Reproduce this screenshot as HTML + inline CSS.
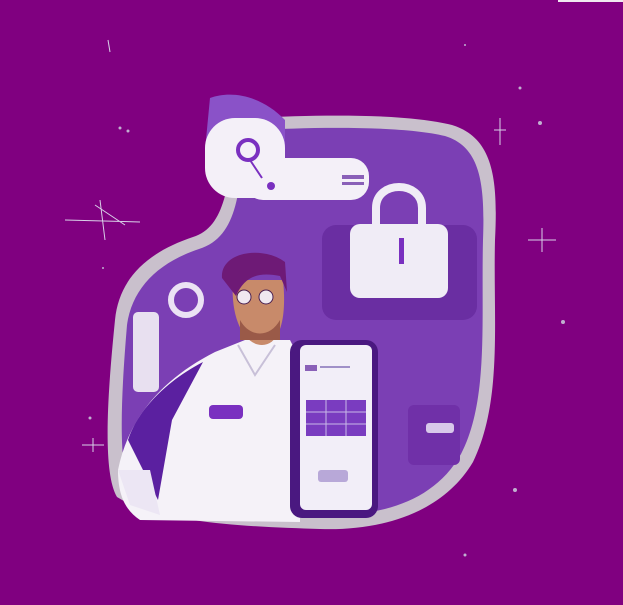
<!DOCTYPE html>
<html><head><meta charset="utf-8"><style>html,body{margin:0;padding:0;background:#800080;}svg{display:block}</style></head>
<body>
<svg width="623" height="605" viewBox="0 0 623 605" xmlns="http://www.w3.org/2000/svg">
<rect width="623" height="605" fill="#800080"/>
<rect x="558" y="0" width="65" height="2" fill="#f0e8f0"/>
<!-- blob border -->
<path d="M235 119 C300 115 400 112 452 125 C494 138 498 180 495 240 C493 320 503 400 473 462 C442 514 380 531 320 529 C250 527 158 523 117 497 C101 470 109 380 115 320 C119 278 148 252 193 237 C227 227 230 178 235 119 Z" fill="#c9c0cc"/>
<path d="M243 131 C300 127 400 125 445 136 C481 147 485 185 483 240 C481 320 489 400 461 454 C434 502 380 517 320 515 C255 513 172 509 130 487 C117 464 122 385 127 325 C132 289 157 263 199 249 C239 237 241 186 243 131 Z" fill="#7b3fb4"/>
<!-- dark panel behind lock -->
<rect x="322" y="225" width="155" height="95" rx="14" fill="#6a2ea2"/>
<!-- pin card -->
<path d="M210 98 C232 90 262 96 285 120 L285 150 L205 150 Z" fill="#8a52c8"/>
<rect x="205" y="118" width="80" height="80" rx="30" fill="#f4f0f8"/>
<rect x="245" y="158" width="124" height="42" rx="18" fill="#f4f0f8"/>
<rect x="342" y="175" width="22" height="4" fill="#8a60b8"/>
<rect x="342" y="182" width="22" height="3" fill="#8a60b8"/>
<circle cx="248" cy="150" r="10" fill="none" stroke="#7a30c0" stroke-width="4"/>
<path d="M250 160 L262 178" stroke="#7a30c0" stroke-width="2"/>
<circle cx="271" cy="186" r="4" fill="#7a30c0"/>
<!-- lock -->
<path d="M376 232 L376 208 C376 180 422 180 422 208 L422 232" fill="none" stroke="#f0ecf6" stroke-width="8"/>
<rect x="350" y="224" width="98" height="74" rx="10" fill="#f0ecf6"/>
<rect x="399" y="238" width="5" height="26" fill="#7a30c0"/>
<!-- ring -->
<circle cx="186" cy="300" r="15" fill="none" stroke="#ebe2f4" stroke-width="6"/>
<!-- left device -->
<rect x="133" y="312" width="26" height="80" rx="5" fill="#e8e0f0"/>
<!-- right box -->
<rect x="408" y="405" width="52" height="60" rx="6" fill="#7030a8"/>
<rect x="426" y="423" width="28" height="10" rx="3" fill="#d8c8ea"/>
<!-- body -->
<path d="M118 470 C128 420 160 380 215 352 L245 340 L290 340 L300 360 L300 522 L140 520 C125 510 118 495 118 470 Z" fill="#f5f2f8"/>
<path d="M128 440 C138 410 165 382 203 362 L172 420 L158 500 Z" fill="#5b20a0"/>
<path d="M118 470 L150 470 L160 515 L130 505 Z" fill="#ece6f4"/>
<rect x="209" y="405" width="34" height="14" rx="4" fill="#7a30c0"/>
<path d="M238 345 L255 375 L275 345" fill="none" stroke="#c8c0d8" stroke-width="2"/>
<!-- head -->
<path d="M233 280 C230 320 245 345 262 345 C280 345 287 318 283 280 Z" fill="#c88a6a"/>
<path d="M222 278 C220 252 262 245 285 262 L287 292 L280 276 C260 272 245 275 236 296 Z" fill="#6e1a76"/>
<circle cx="244" cy="297" r="7" fill="#f0e8f0" stroke="#4a2050" stroke-width="1"/><circle cx="266" cy="297" r="7" fill="#f0e8f0" stroke="#4a2050" stroke-width="1"/>
<path d="M240 320 C250 338 270 338 280 320 L280 340 L240 340 Z" fill="#9a5a48"/>
<!-- phone -->
<rect x="290" y="340" width="88" height="178" rx="12" fill="#4a1880"/>
<rect x="300" y="345" width="72" height="165" rx="6" fill="#f2eef8"/>
<rect x="306" y="400" width="60" height="36" fill="#7a3cc0"/>
<path d="M306 412 H366 M306 424 H366 M326 400 V436 M346 400 V436" stroke="#c8b8e8" stroke-width="1"/>
<rect x="305" y="365" width="12" height="6" fill="#8a60b8"/>
<rect x="320" y="366" width="30" height="2" fill="#a090c8"/>
<rect x="318" y="470" width="30" height="12" rx="3" fill="#b8a8d8"/>
<!-- sparkles -->
<g stroke="#d8d0e8" stroke-width="1" fill="none">
<path d="M65 220 L140 222 M100 200 L105 240 M95 205 L125 225"/>
<path d="M500 118 L500 145 M494 130 L506 130"/>
<path d="M528 240 L556 240 M542 228 L542 252"/>
<path d="M82 445 L104 445 M93 438 L93 452"/>
<path d="M108 40 L110 52"/>
</g>
<g fill="#c0b0d0"><circle cx="120" cy="128" r="1.5"/><circle cx="128" cy="131" r="1.5"/><circle cx="465" cy="45" r="1"/><circle cx="520" cy="88" r="1.5"/><circle cx="563" cy="322" r="2"/><circle cx="465" cy="555" r="1.5"/><circle cx="103" cy="268" r="1"/><circle cx="540" cy="123" r="2"/><circle cx="515" cy="490" r="2"/><circle cx="90" cy="418" r="1.5"/></g>
</svg>
</body></html>
